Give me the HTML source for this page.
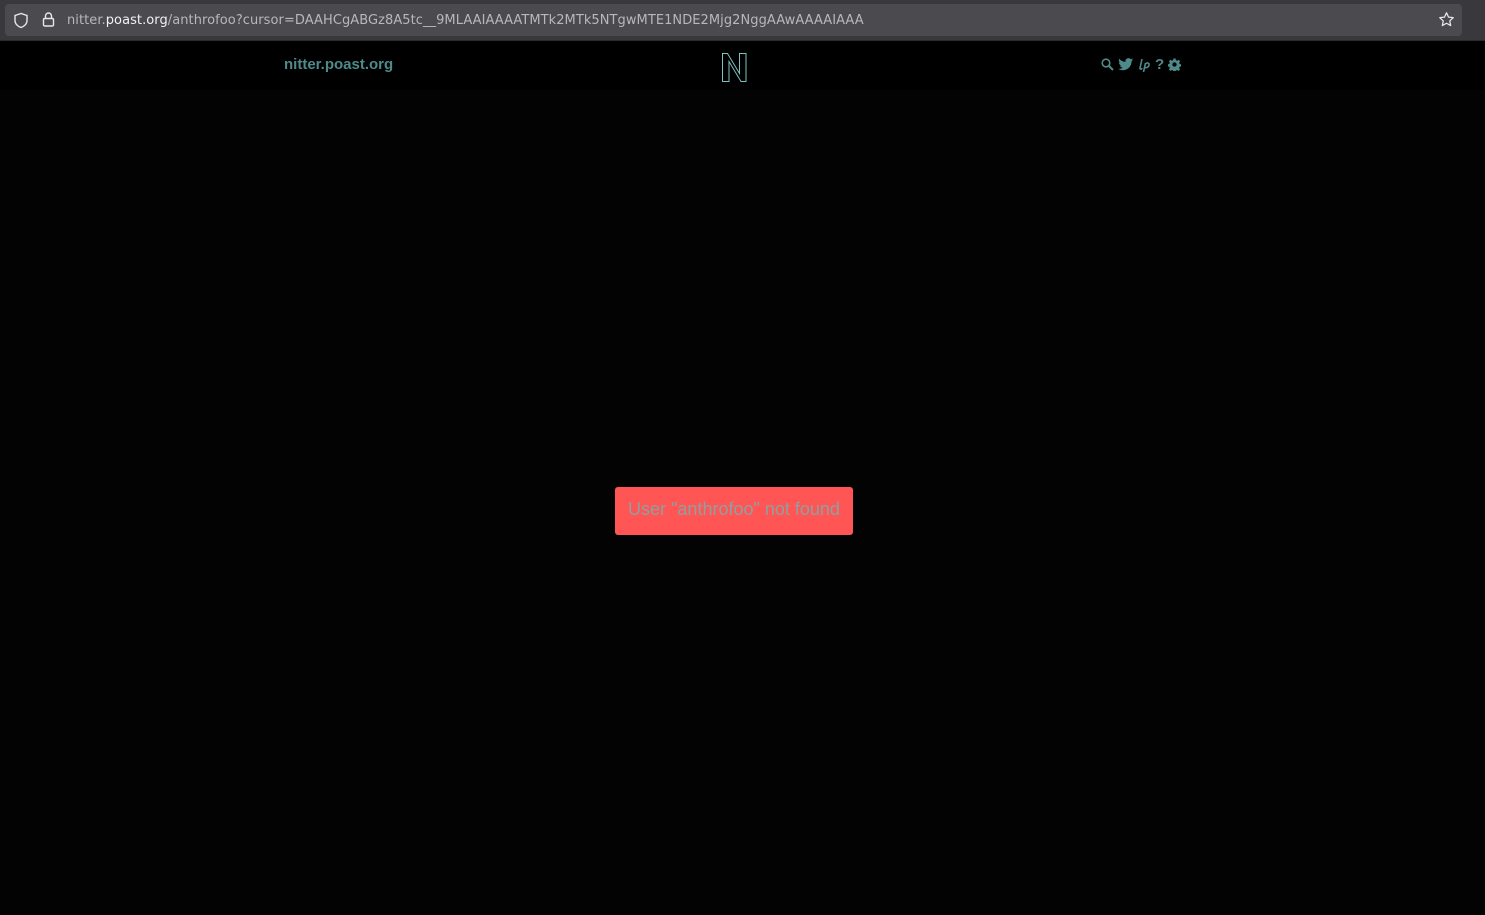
<!DOCTYPE html>
<html><head><meta charset="utf-8"><style>
*{margin:0;padding:0;box-sizing:border-box}
body{width:1485px;height:915px;background:#030303;font-family:"Liberation Sans",sans-serif;overflow:hidden;position:relative}
.chrome{position:absolute;left:0;top:0;width:1485px;height:40px;background:#38383d}
.url{position:absolute;left:5px;top:4px;width:1457px;height:32px;background:#4a4a4f;border-radius:4px}
.urltext{position:absolute;left:67px;top:13px;font-family:"DejaVu Sans","Liberation Sans",sans-serif;font-size:13px;color:#b8b8bc;letter-spacing:0.06px}
.urltext b{font-weight:normal;color:#f2f2f2}
nav{position:absolute;left:0;top:40px;width:1485px;height:50px;background:#000;border-top:1px solid #2a2a2a}
.site{position:absolute;left:284px;top:15px;font-weight:bold;font-size:15px;color:#4e8a8a}
.logo{position:absolute;left:721px;top:11px}
.icons{position:absolute;left:1101px;top:15px;display:flex;gap:4px;align-items:center}
.err{position:absolute;left:615px;top:487px;width:238px;height:48px;background:#ff5555;border-radius:3px;color:#8fa0a0;font-size:18px;text-align:center;line-height:44px}
</style></head><body>
<div class="chrome"><div class="url"></div>
<svg style="position:absolute;left:13px;top:12px" width="16" height="17" viewBox="0 0 16 17"><path d="M8 1.5L2 3.5v5c0 3.5 3 6 6 7 3-1 6-3.5 6-7v-5z" fill="none" stroke="#e8e8e8" stroke-width="1.4"/></svg>
<svg style="position:absolute;left:42px;top:11px" width="13" height="17" viewBox="0 0 13 17"><path d="M3.5 7V5a3 3 0 0 1 6 0v2" fill="none" stroke="#e8e8e8" stroke-width="1.4"/><rect x="1.5" y="7.5" width="10" height="7.5" rx="1.2" fill="none" stroke="#e8e8e8" stroke-width="1.4"/></svg>
<div class="urltext">nitter.<b>poast.org</b>/anthrofoo?cursor=DAAHCgABGz8A5tc__9MLAAIAAAATMTk2MTk5NTgwMTE1NDE2Mjg2NggAAwAAAAIAAA</div>
<svg style="position:absolute;left:1438px;top:11px" width="17" height="17" viewBox="0 0 24 24"><path d="M12 2.5l2.9 6.1 6.6.8-4.9 4.6 1.3 6.6L12 17.3l-5.9 3.3 1.3-6.6-4.9-4.6 6.6-.8z" fill="none" stroke="#e8e8e8" stroke-width="1.8" stroke-linejoin="round"/></svg>
</div>
<nav>
<div class="site">nitter.poast.org</div>
<svg class="logo" width="27" height="31" viewBox="0 0 27 31"><path d="M1.5 1.5h5l12 20v-20h6.5v28h-5L8 9.5v20H1.5z" fill="none" stroke="#7ec0c0" stroke-width="1"/></svg>
<div class="icons">
<svg width="13" height="13" viewBox="0 0 13 13"><circle cx="5" cy="5" r="3.8" fill="none" stroke="#4e8a8a" stroke-width="1.6"/><path d="M8 8l4 4" stroke="#4e8a8a" stroke-width="2"/></svg>
<svg width="16" height="13" viewBox="0 0 24 20"><path d="M23 2.5c-.8.4-1.8.6-2.7.7 1-.6 1.7-1.5 2-2.6-.9.5-1.9.9-3 1.1A4.7 4.7 0 0 0 11.3 6 13.3 13.3 0 0 1 1.6 1.1a4.7 4.7 0 0 0 1.5 6.3c-.8 0-1.5-.2-2.1-.6 0 2.3 1.6 4.2 3.8 4.6-.7.2-1.4.2-2.1.1.6 1.9 2.3 3.2 4.4 3.3A9.4 9.4 0 0 1 0 16.7 13.3 13.3 0 0 0 7.2 18.8c8.6 0 13.4-7.2 13.4-13.4v-.6c.9-.7 1.7-1.5 2.4-2.3z" fill="#4e8a8a"/></svg>
<svg width="13" height="14" viewBox="0 0 13 14"><path d="M4 1L2 10c-.3 1.5 1.5 1.5 2 0" fill="none" stroke="#4e8a8a" stroke-width="1.6"/><path d="M7.5 5L5.5 14M7.5 6c1-1.5 4-1.5 3.5 1s-3 3-4.5 2.5" fill="none" stroke="#4e8a8a" stroke-width="1.6"/></svg>
<span style="color:#4e8a8a;font-weight:bold;font-size:15px">?</span>
<svg width="13" height="13" viewBox="0 0 24 24"><path d="M10 1h4l.6 3 2.3 1 2.6-1.7 2.8 2.8-1.7 2.6 1 2.3 3 .6v4l-3 .6-1 2.3 1.7 2.6-2.8 2.8-2.6-1.7-2.3 1-.6 3h-4l-.6-3-2.3-1-2.6 1.7-2.8-2.8 1.7-2.6-1-2.3-3-.6v-4l3-.6 1-2.3-1.7-2.6 2.8-2.8 2.6 1.7 2.3-1z M12 8a4 4 0 1 0 0 8 4 4 0 0 0 0-8z" fill="#4e8a8a" fill-rule="evenodd"/></svg>
</div>
</nav>
<div class="err">User "anthrofoo" not found</div>
</body></html>
